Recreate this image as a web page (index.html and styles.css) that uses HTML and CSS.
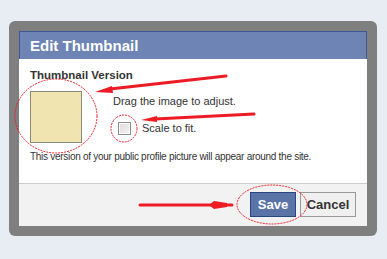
FILE: index.html
```html
<!DOCTYPE html>
<html lang="en">
<head>
    <meta charset="UTF-8">
    <meta name="viewport" content="width=device-width, initial-scale=1.0">
    <title>Edit Thumbnail</title>
    <link rel="stylesheet" href="styles.css">
</head>
<body>
    <div class="frame">
        <div class="dialog">
            <div class="dialog-header">Edit Thumbnail</div>
            <div class="dialog-body">
                <div class="section-title">Thumbnail Version</div>
                <div class="thumb-row">
                    <div class="thumb"></div>
                    <div class="thumb-options">
                        <div class="hint">Drag the image to adjust.</div>
                        <label class="scale">
                            <span class="checkbox"></span>
                            <span>Scale to fit.</span>
                        </label>
                    </div>
                </div>
                <div class="note">This version of your public profile picture will appear around the site.</div>
            </div>
            <div class="dialog-footer">
                <button class="btn save">Save</button>
                <button class="btn cancel">Cancel</button>
            </div>
        </div>
    </div>

    <!-- hand drawn red marks over the screenshot -->
    <svg class="marks" width="387" height="259" viewBox="0 0 387 259">
        <g fill="none" stroke="#ed1c24" stroke-width="1" stroke-dasharray="2 1">
            <ellipse cx="56" cy="116" rx="41" ry="37"/>
            <ellipse cx="124" cy="128.5" rx="13" ry="13.5"/>
            <ellipse cx="272" cy="204.5" rx="35" ry="19.5"/>
        </g>
        <g stroke="#ed1c24" stroke-linecap="round">
            <line x1="226" y1="76" x2="110" y2="89" stroke-width="3"/>
            <line x1="254" y1="114" x2="155" y2="119" stroke-width="3"/>
            <line x1="140" y1="205" x2="232" y2="205" stroke-width="3"/>
        </g>
        <g fill="#ed1c24">
            <polygon points="95,92 112,86 113,93"/>
            <polygon points="141,120 157,116 157,122"/>
            <polygon points="209,205 214,201 227,203 227,207 214,209"/>
        </g>
    </svg>
</body>
</html>
```

FILE: styles.css
```css
body {
    margin: 0;
    background: #e8ecf3;
    font-family: 'Liberation Sans', Arial, sans-serif;
    position: relative;
    height: 259px;
    overflow: hidden;
}
.frame {
    margin: 21px 0 0 9px;
    width: 348px;
    padding: 10px;
    background: #7f7f7f;
    border-radius: 6px;
}
.dialog {
    background: #fff;
    height: 195px;
    display: flex;
    flex-direction: column;
}
.dialog-header {
    box-sizing: border-box;
    height: 28px;
    background: #6d84b4;
    border: 1px solid #3b5998;
    border-bottom: none;
    color: #fff;
    font-weight: bold;
    font-size: 15px;
    line-height: 27px;
    padding-left: 10px;
}
.dialog-body {
    height: 124px;
    box-sizing: border-box;
    padding: 10px 11px 0;
    color: #333;
    font-size: 11px;
}
.section-title {
    font-weight: bold;
    font-size: 11.5px;
    line-height: 13px;
}
.thumb-row {
    display: flex;
    margin-top: 9px;
}
.thumb {
    width: 50px;
    height: 50px;
    background: #f0e4b0;
    border: 1px solid #8a8a7a;
}
.thumb-options {
    margin-left: 31px;
    padding-top: 4px;
}
.hint {
    line-height: 13px;
}
.scale {
    display: flex;
    align-items: center;
    margin-top: 14px;
    margin-left: 5px;
    line-height: 13px;
}
.checkbox {
    width: 11px;
    height: 11px;
    border: 1px solid #8c8c8c;
    background: linear-gradient(135deg, #dcdcdc 0%, #f4f4f4 100%);
    box-shadow: inset 0 0 0 1px #fff;
    margin-right: 11px;
}
.note {
    margin-top: 7px;
    line-height: 13px;
    font-size: 10px;
    letter-spacing: -0.28px;
}
.dialog-footer {
    flex: 1;
    background: #f2f2f2;
    border-top: 1px solid #ccc;
    display: flex;
    justify-content: flex-end;
    align-items: flex-start;
    gap: 4px;
    padding: 8px 11px 0 0;
}
.btn {
    height: 25px;
    font-family: 'Liberation Sans', Arial, sans-serif;
    font-weight: bold;
    font-size: 13px;
    padding: 0;
    cursor: pointer;
}
.save {
    width: 46px;
    background: #5b74a8;
    border: 1px solid #29447e;
    color: #fff;
}
.cancel {
    width: 56px;
    background: #f0f0f0;
    border: 1px solid #999;
    color: #333;
}
.marks {
    position: absolute;
    left: 0;
    top: 0;
    pointer-events: none;
}
```
